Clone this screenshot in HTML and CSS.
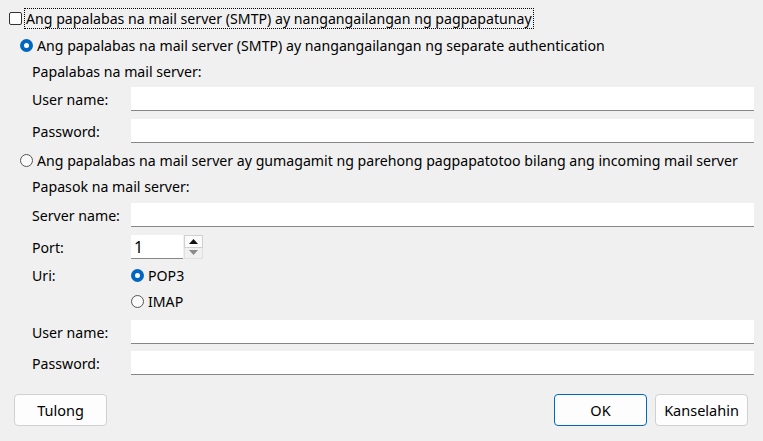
FILE: index.html
```html
<!DOCTYPE html>
<html>
<head>
<meta charset="utf-8">
<link rel="stylesheet" href="styles.css">
</head>
<body>
<div class="dlg">
  <div class="row r-check">
    <span class="checkbox"></span>
    <span class="focus">Ang papalabas na mail server (SMTP) ay nangangailangan ng pagpapatunay</span>
  </div>
  <div class="row r-radio g7">
    <span class="radio on"></span>
    <span>Ang papalabas na mail server (SMTP) ay nangangailangan ng separate authentication</span>
  </div>
  <div class="row r-label g6">Papalabas na mail server:</div>
  <div class="row r-field g6"><span class="lbl">User name:</span><span class="input"></span></div>
  <div class="row r-field g8"><span class="lbl">Password:</span><span class="input"></span></div>
  <div class="row r-radio g7">
    <span class="radio"></span>
    <span>Ang papalabas na mail server ay gumagamit ng parehong pagpapatotoo bilang ang incoming mail server</span>
  </div>
  <div class="row r-label g6">Papasok na mail server:</div>
  <div class="row r-field g7"><span class="lbl">Server name:</span><span class="input"></span></div>
  <div class="row r-field g8"><span class="lbl">Port:</span>
    <span class="spin-input">1</span>
    <span class="spin-btns">
      <span class="spin-up"><svg width="9" height="5" viewBox="0 0 9 5"><path d="M0 5 L4.5 0 L9 5Z" fill="#111"/></svg></span>
      <span class="spin-down"><svg width="9" height="5" viewBox="0 0 9 5"><path d="M0 0 L4.5 5 L9 0Z" fill="#8a8a8a"/></svg></span>
    </span>
  </div>
  <div class="row r-opt g6"><span class="lbl">Uri:</span><span class="radio on"></span><span>POP3</span></div>
  <div class="row r-opt g6"><span class="lbl"></span><span class="radio"></span><span>IMAP</span></div>
  <div class="row r-field g9"><span class="lbl">User name:</span><span class="input"></span></div>
  <div class="row r-field g7"><span class="lbl">Password:</span><span class="input"></span></div>
  <div class="buttons">
    <button class="btn">Tulong</button>
    <span class="spacer"></span>
    <button class="btn default">OK</button>
    <button class="btn">Kanselahin</button>
  </div>
</div>
</body>
</html>
```
FILE: styles.css
```css
html, body {
  margin: 0;
  padding: 0;
  background: #f0f0f0;
}
body {
  font-family: "Noto Sans", "Open Sans", sans-serif;
  font-size: 14.15px;
  color: #000;
  width: 763px;
  height: 441px;
  overflow: hidden;
}
.dlg {
  padding: 8px 9px 0 9px;
  display: flex;
  flex-direction: column;
}
.row {
  display: flex;
  align-items: center;
  white-space: nowrap;
}
.g6 { margin-top: 6px; }
.g7 { margin-top: 7px; }
.g8 { margin-top: 8px; }
.g9 { margin-top: 9px; }
.r-check { height: 20px; }
.r-radio { height: 20px; padding-left: 11px; }
.r-label { height: 20px; padding-left: 23px; }
.r-field { height: 24px; padding-left: 23px; }
.r-opt { height: 20px; padding-left: 23px; }
.lbl { width: 99px; flex: none; }
.checkbox {
  width: 11px;
  height: 11px;
  border: 1px solid #333;
  border-radius: 2px;
  background: #fdfdfd;
  margin-right: 3px;
  flex: none;
}
.focus {
  outline: 1px dotted #000;
  outline-offset: 0;
  padding: 0 1px;
  line-height: 19px;
}
.radio {
  width: 11px;
  height: 11px;
  border: 1px solid #555;
  border-radius: 50%;
  background: #fafafa;
  margin-right: 4px;
  flex: none;
  box-sizing: content-box;
}
.radio.on {
  background: #fff;
  border: 4px solid #0067c0;
  width: 5px;
  height: 5px;
}
.input {
  flex: 1;
  height: 23px;
  background: #fff;
  border-bottom: 1px solid #868686;
}
.spin-input {
  width: 49px;
  height: 23px;
  background: #fff;
  border-bottom: 1px solid #868686;
  padding-left: 3px;
  line-height: 24px;
  font-size: 16px;
}
.spin-btns {
  margin-left: 1px;
  display: flex;
  flex-direction: column;
  width: 19px;
  height: 24px;
}
.spin-up, .spin-down {
  flex: 1;
  display: flex;
  align-items: center;
  justify-content: center;
  box-sizing: border-box;
  border: 1px solid #d0d0d0;
}
.spin-up { background: #fbfbfb; }
.spin-down { background: #f0f0f0; border-top: none; border-color: #e0e0e0; }
.buttons {
  display: flex;
  margin-top: 19px;
  padding-left: 5px;
  padding-right: 6px;
  gap: 8px;
}
.spacer { flex: 1; }
.btn {
  width: 93px;
  height: 32px;
  background: #fdfdfd;
  border: 1px solid #d0d0d0;
  border-radius: 4px;
  font-family: inherit;
  font-size: 14.5px;
  color: #000;
  padding: 0;
}
.btn.default {
  border-color: #0067c0;
}
```
